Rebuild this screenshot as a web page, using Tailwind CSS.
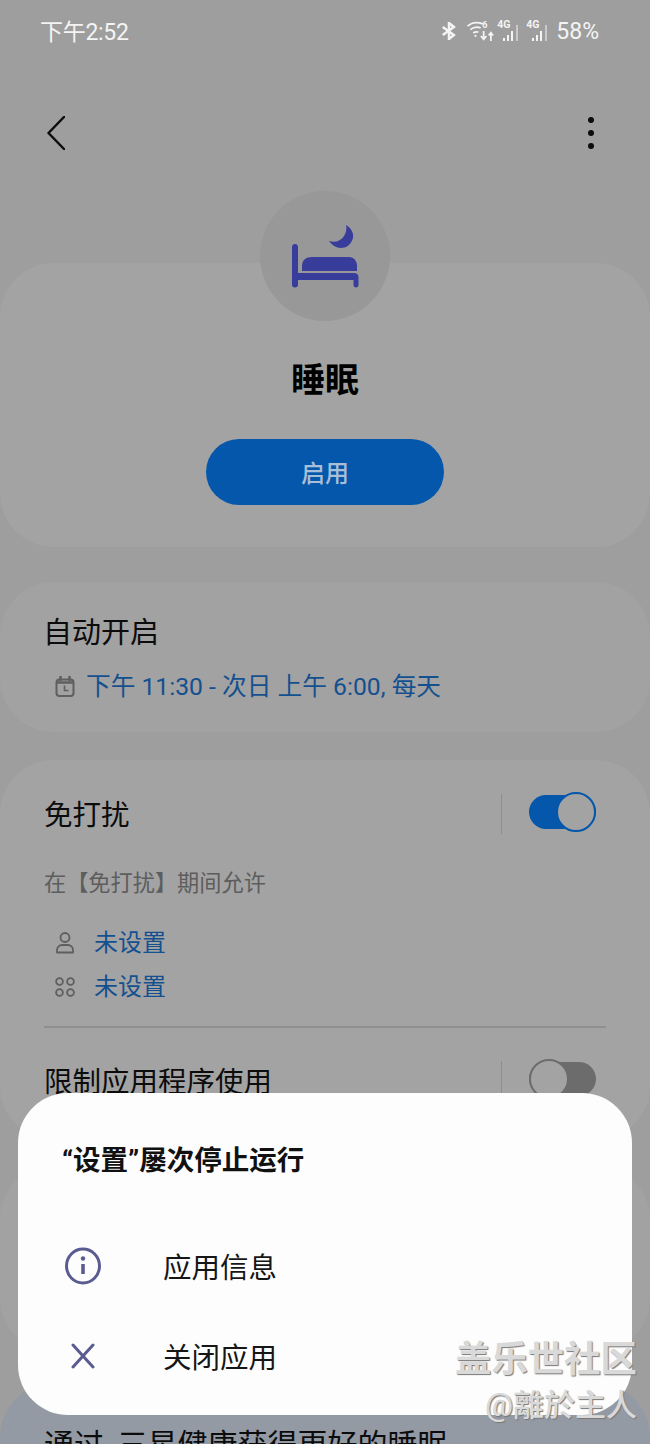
<!DOCTYPE html>
<html lang="zh-CN">
<head>
  <meta charset="UTF-8" />
  <meta name="viewport" content="width=device-width, initial-scale=1.0"/>
  <title>睡眠</title>
  <script src="https://cdn.jsdelivr.net/npm/@tailwindcss/browser@4"></script>
</head>
<body class="bg-[#9e9e9e]">
<div class="relative w-[650px] h-[1444px] overflow-hidden bg-[#9e9e9e] font-['Roboto','Noto_Sans_CJK_SC',sans-serif] text-[#0c0c0c]">

  <!-- status bar -->
  <div class="h-[62px] pl-[40px] pr-[51px] flex items-center justify-between text-[#f4f4f4]">
    <span class="mt-[2px] text-[23px] leading-none tracking-[-0.3px]">下午2:52</span>
    <div class="flex items-center">
      <svg class="w-[16px] h-[18px]" viewBox="0 0 18 20" fill="none" stroke="#f4f4f4" stroke-width="2.800"><path d="M2 5.500 14.500 14.500 9 19V1l5.500 4.500L2 14.500"/></svg>
      <div class="relative w-[27px] h-[22px] ml-[10px]">
        <svg class="absolute left-0 top-[1px] w-[17px] h-[16px]" viewBox="0 0 15 14" fill="none" stroke="#f4f4f4" stroke-width="1.500"><path d="M.5 4.500C4 1.200 9 .6 14 2.500M3 7.500C5.500 5.500 9 5 12 6M5.500 10.500C6.800 9.500 8.500 9.300 10 9.800"/><circle cx="7.500" cy="13" r="1" fill="#f4f4f4" stroke="none"/></svg>
        <span class="absolute left-[15px] top-[1px] text-[9px] leading-none font-bold">6</span>
        <svg class="absolute left-[13px] top-[11px] w-[14px] h-[10px]" viewBox="0 0 12 9" fill="none" stroke="#f4f4f4" stroke-width="1.600"><path d="M3 0v7M.5 4.500 3 7.500l2.500-3M9.500 9V2M7.500 4 9.500 1.500 11.500 4"/></svg>
      </div>
      <div class="relative w-[22px] h-[20px] ml-[3px] mr-[7px]">
        <span class="absolute left-0 top-[-1px] text-[10.500px] leading-none font-bold">4G</span>
        <svg class="absolute left-0 top-0 w-[22px] h-[20px]" viewBox="0 0 22 20" fill="#f4f4f4"><rect x="6" y="17" width="2" height="3"/><rect x="10" y="14" width="2" height="6"/><rect x="14" y="10" width="2" height="10"/><rect x="19" y="4" width="2" height="16" opacity=".5"/></svg>
      </div>
      <div class="relative w-[22px] h-[20px] mr-[8px]">
        <span class="absolute left-0 top-[-1px] text-[10.500px] leading-none font-bold">4G</span>
        <svg class="absolute left-0 top-0 w-[22px] h-[20px]" viewBox="0 0 22 20" fill="#f4f4f4"><rect x="6" y="17" width="2" height="3"/><rect x="10" y="14" width="2" height="6"/><rect x="14" y="10" width="2" height="10"/><rect x="19" y="4" width="2" height="16" opacity=".5"/></svg>
      </div>
      <span class="text-[23px] leading-none">58%</span>
    </div>
  </div>

  <!-- nav -->
  <div class="h-[129px] pl-[47px] pr-[56px] pt-[54px] flex items-start justify-between">
    <svg class="w-[18px] h-[34px]" viewBox="0 0 18 34" fill="none" stroke="#0c0c0c" stroke-width="2.500" stroke-linecap="round" stroke-linejoin="round"><path d="M17 1 1.500 17 17 33"/></svg>
    <div class="flex flex-col gap-[7px] pt-[1px]">
      <span class="w-[6px] h-[6px] rounded-full bg-[#0c0c0c]"></span>
      <span class="w-[6px] h-[6px] rounded-full bg-[#0c0c0c]"></span>
      <span class="w-[6px] h-[6px] rounded-full bg-[#0c0c0c]"></span>
    </div>
  </div>

  <!-- hero -->
  <div class="relative z-10 mx-auto w-[130px] h-[130px] -mb-[58px] rounded-full bg-[#989898] flex items-center justify-center">
    <svg class="w-[68px] h-[66px]" viewBox="0 0 68 66" fill="#383d9c">
      <path d="M4 21c1.700 0 3 1.300 3 3v26h56c2.500 0 4.500 1.500 4.500 4v8c0 1.400-1 2.500-2.500 2.500s-2.500-1.100-2.500-2.500v-5H7v5c0 1.400-1.300 2.500-3 2.500S1 63.400 1 62V24c0-1.700 1.300-3 3-3Z"/>
      <path d="M11 48v-5c0-6 4-9 10-9h37c5 0 8 4 8 9v5Z"/>
      <path d="M55 2C60 5 63 10 62 15 60 22 55 25 50 25 45 25 41 22 38 18 44 20 50 18 53 13 55 10 56 6 55 2Z"/>
    </svg>
  </div>
  <div class="h-[284px] mb-[35px] rounded-[54px] bg-[#a3a3a3] flex flex-col items-center pt-[92px]">
    <h1 class="text-[34px] leading-[50px] font-bold text-black">睡眠</h1>
    <button class="mt-[34px] w-[238px] h-[66px] pt-[3px] rounded-full bg-[#0457aa] text-[24px] font-medium text-[#a8bfd9]">启用</button>
  </div>

  <!-- auto on -->
  <div class="h-[150px] mb-[28px] rounded-[54px] bg-[#a2a2a2] pl-[43px] pt-[32px]">
    <div class="text-[29px] leading-[38px]">自动开启</div>
    <div class="mt-[18px] flex items-center">
      <svg class="w-[20px] h-[22px] ml-[12px] mr-[11px]" viewBox="0 0 20 22" fill="none" stroke="#5f5f5f" stroke-width="2"><rect x="1.500" y="3.500" width="17" height="16.500" rx="3"/><path d="M5.500 0v5M14.500 0v5M2 6.500h16" stroke-width="2.500"/><path d="M9.500 9.500v5h4" stroke-width="1.600"/></svg>
      <span class="text-[24.700px] leading-[34px] text-[#14508f]">下午 11:30 - 次日 上午 6:00, 每天</span>
    </div>
  </div>

  <!-- do not disturb -->
  <div class="h-[380px] mb-[25px] rounded-[54px] bg-[#a3a3a3] px-[44px] pt-[32px]">
    <div class="flex items-center justify-between h-[44px]">
      <span class="mt-[4px] text-[28.500px] leading-[44px]">免打扰</span>
      <div class="flex items-center mr-[10px]">
        <span class="w-[1px] h-[40px] bg-[#8d8d8d] mr-[27px]"></span>
        <div class="relative w-[67px] h-[34px] rounded-full bg-[#0457aa] mt-[-4px]">
          <span class="absolute right-0 top-[-3px] w-[40px] h-[40px] rounded-full bg-[#a3a3a3] border-[2px] border-[#0457aa]"></span>
        </div>
      </div>
    </div>
    <div class="mt-[29px] text-[22.200px] leading-[36px] text-[#5d5d5d]">在【免打扰】期间允许</div>
    <div class="mt-[24px] flex items-center h-[36px]">
      <svg class="w-[18px] h-[22px] ml-[12px] mr-[20px]" viewBox="0 0 18 22" fill="none" stroke="#5f5f5f" stroke-width="1.800"><circle cx="9" cy="5.500" r="4.500"/><path d="M1 20.500v-2.500c0-3 2.500-5 5-5h6c2.500 0 5 2 5 5v2.500Z" stroke-linejoin="round"/></svg>
      <span class="text-[24px] leading-[36px] text-[#14508f]">未设置</span>
    </div>
    <div class="mt-[8px] flex items-center h-[36px]">
      <svg class="w-[20px] h-[20px] ml-[11px] mr-[19px]" viewBox="0 0 20 20" fill="none" stroke="#5f5f5f" stroke-width="1.800"><circle cx="4.500" cy="4.500" r="3.400"/><circle cx="15.500" cy="4.500" r="3.400"/><circle cx="4.500" cy="15.500" r="3.400"/><circle cx="15.500" cy="15.500" r="3.400"/></svg>
      <span class="text-[24px] leading-[36px] text-[#14508f]">未设置</span>
    </div>
    <div class="mt-[21px] h-[2px] bg-[#8f8f8f]"></div>
    <div class="mt-[31px] flex items-center justify-between h-[44px]">
      <span class="mt-[4px] text-[28.500px] leading-[44px] whitespace-nowrap">限制应用程序使用</span>
      <div class="flex items-center mr-[10px]">
        <span class="w-[1px] h-[40px] bg-[#8d8d8d] mr-[27px]"></span>
        <div class="relative w-[67px] h-[34px] rounded-full bg-[#6c6c6c] mt-[-4px]">
          <span class="absolute left-0 top-[-3px] w-[40px] h-[40px] rounded-full bg-[#a3a3a3] border-[2px] border-[#6c6c6c]"></span>
        </div>
      </div>
    </div>
  </div>

  <!-- hidden card behind the dialog -->
  <div class="h-[187px] mb-[31px] rounded-[54px] bg-[#a2a2a2]"></div>

  <!-- samsung health card -->
  <div class="h-[120px] rounded-t-[54px] bg-[#949aa4] pl-[44px] pt-[42px]">
    <div class="text-[30px] leading-[40px] [word-spacing:6px] whitespace-nowrap">通过 三星健康获得更好的睡眠</div>
  </div>

  <!-- dialog -->
  <div class="absolute left-[18px] top-[1093px] z-20 w-[614px] h-[322px] rounded-[50px] bg-[#fdfdfd] pl-[44px]">
    <div class="pt-[48px] text-[27.500px] leading-[40px] font-bold text-[#111]">“设置”屡次停止运行</div>
    <div class="mt-[68px] flex items-center h-[40px]">
      <svg class="w-[38px] h-[38px] mb-[6px] mr-[61px] ml-[2px]" viewBox="0 0 38 38" fill="none" stroke="#5a5c91" stroke-width="3"><ellipse cx="19" cy="19" rx="16.500" ry="17"/><path d="M19 17v10" stroke-width="3.600"/><circle cx="19" cy="11.500" r="2.200" fill="#5a5c91" stroke="none"/></svg>
      <span class="text-[28.500px] leading-[40px] text-[#161616]">应用信息</span>
    </div>
    <div class="mt-[50px] flex items-center h-[40px]">
      <svg class="w-[24px] h-[26px] mb-[6px] ml-[9px] mr-[68px]" viewBox="0 0 24 26" fill="none" stroke="#5a5c91" stroke-width="3" stroke-linecap="round"><path d="M2 2l20 22M22 2 2 24"/></svg>
      <span class="text-[28.500px] leading-[40px] text-[#161616]">关闭应用</span>
    </div>
  </div>

  <!-- watermark -->
  <div class="absolute right-[13px] top-[1338px] z-30 flex flex-col items-end text-[#d9d9d9] [text-shadow:1px_1px_1px_#777]">
    <span class="text-[36.400px] leading-[44px] font-bold">盖乐世社区</span>
    <span class="mt-[6px] text-[31px] leading-[36px] font-medium">@離於主人</span>
  </div>
</div>
</body>
</html>
